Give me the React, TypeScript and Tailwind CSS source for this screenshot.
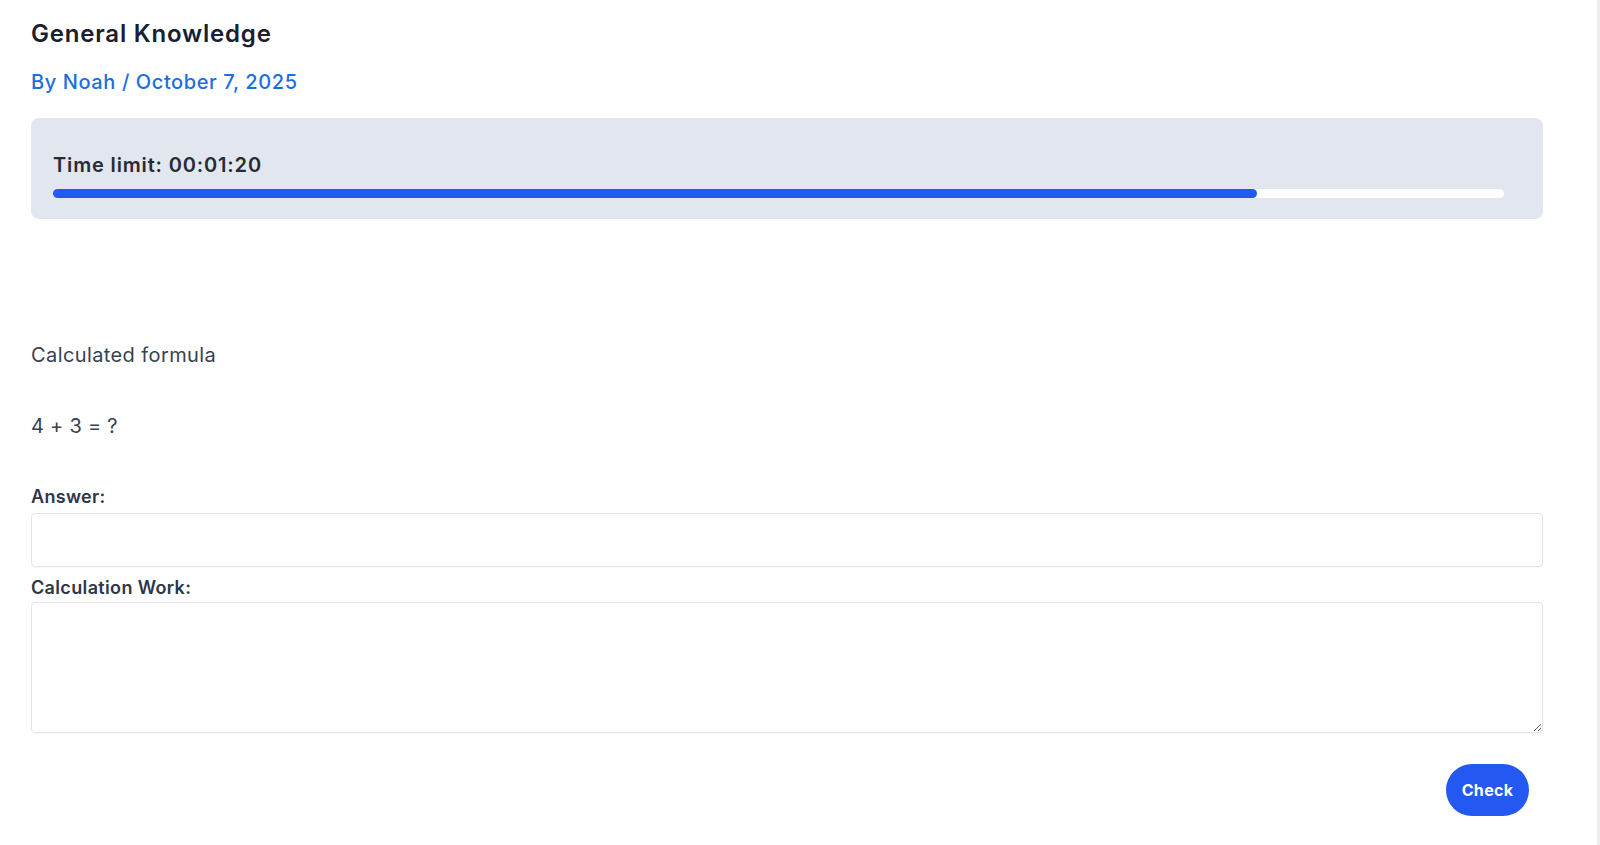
import { useState } from "react";

export default function App() {
  const [answer, setAnswer] = useState("");
  const [work, setWork] = useState("");
  const progress = 83;

  return (
    <div
      className="min-h-screen border-r-[3px] border-[#eceef2] bg-white pl-[31px] pr-[54px] pt-[18px] pb-[28px] text-[#1a202c]"
      style={{ fontFamily: "Inter, 'Noto Sans', Arial, sans-serif" }}
    >
      <h1 className="text-[24px] font-semibold leading-[32px] tracking-[0.8px] text-[#18202f]">
        General Knowledge
      </h1>
      <p className="mt-[18px] text-[20px] font-medium leading-[28px] tracking-[0.6px] text-[#1a6fe0]">
        By Noah / October 7, 2025
      </p>

      <div className="mt-[22px] rounded-lg bg-[#e2e6ee] pl-[22px] pr-[39px] pt-[33px] pb-[21px]">
        <div className="text-[20px] font-semibold leading-[28px] tracking-[0.85px] text-[#272b33]">
          Time limit: 00:01:20
        </div>
        <div className="mt-[10px] h-[9px] w-full rounded-full bg-white">
          <div
            className="h-full rounded-full bg-[#2358f1]"
            style={{ width: `${progress}%` }}
          />
        </div>
      </div>

      <p className="mt-[122px] text-[20px] leading-[28px] tracking-[0.4px] text-[#374151]">
        Calculated formula
      </p>
      <p className="mt-[43px] text-[20px] leading-[28px] tracking-[0.25px] text-[#374151]">
        4 + 3 = ?
      </p>

      <div className="mt-[45px] flex flex-col">
        <label className="text-[18px] font-semibold leading-[24px] tracking-[0.3px] text-[#2d3748]">
          Answer:
        </label>
        <input
          type="text"
          value={answer}
          onChange={(e) => setAnswer(e.target.value)}
          className="mt-[4px] h-[54px] w-full rounded-[4px] border border-[#e1e5eb] px-3 text-[18px] shadow-[0_1px_1px_rgba(0,0,0,0.03)] outline-none"
        />
        <label className="mt-[9px] text-[18px] font-semibold leading-[24px] tracking-[0.35px] text-[#2d3748]">
          Calculation Work:
        </label>
        <textarea
          value={work}
          onChange={(e) => setWork(e.target.value)}
          className="mt-[2px] h-[131px] w-full rounded-[4px] border border-[#e1e5eb] px-3 py-2 text-[18px] shadow-[0_1px_1px_rgba(0,0,0,0.03)] outline-none"
        />
      </div>

      <div className="mt-[31px] flex justify-end pr-[14px]">
        <button className="h-[52px] w-[83px] rounded-full bg-[#2358f1] text-[16px] font-bold tracking-[0.3px] text-white">
          Check
        </button>
      </div>
    </div>
  );
}
